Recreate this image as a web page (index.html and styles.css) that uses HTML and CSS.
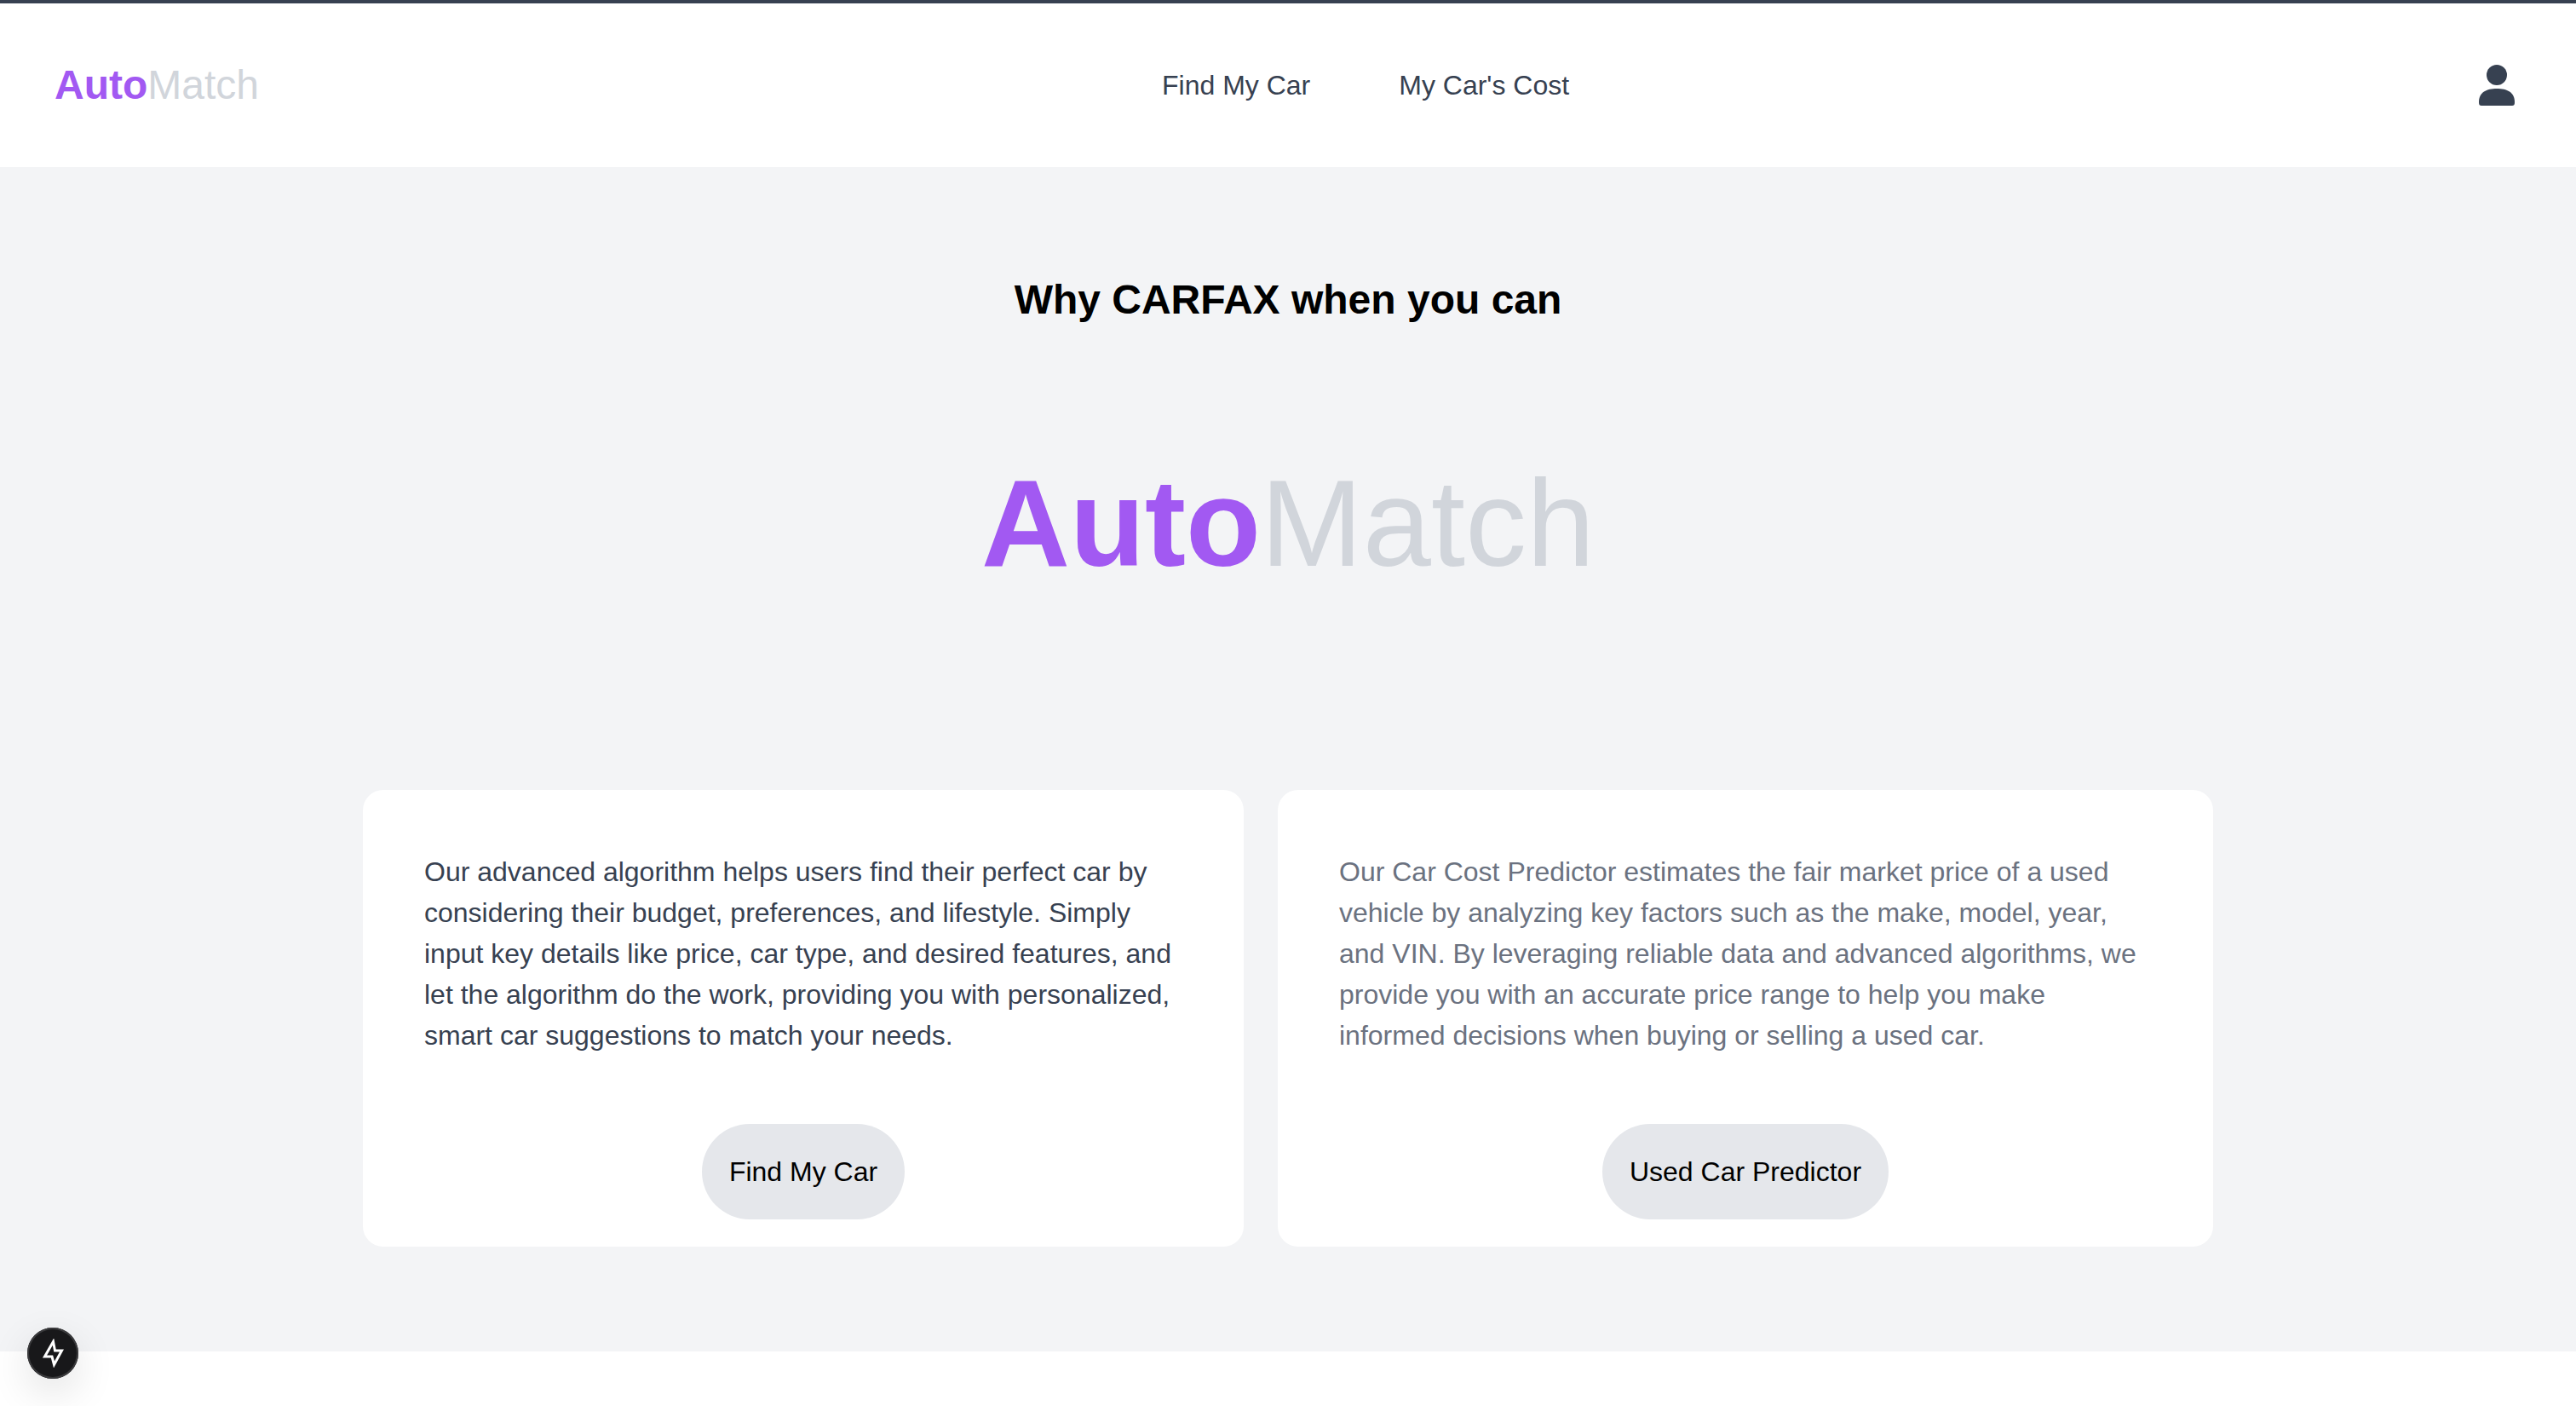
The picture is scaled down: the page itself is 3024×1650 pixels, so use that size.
FILE: index.html
```html
<!DOCTYPE html>
<html lang="en">
<head>
<meta charset="utf-8">
<title>AutoMatch</title>
<link rel="stylesheet" href="styles.css">
</head>
<body>
<header class="header">
  <a class="logo"><span class="brand">Auto</span><span class="muted">Match</span></a>
  <nav class="nav"><a>Find My Car</a><a>My Car's Cost</a></nav>
  <svg class="user" viewBox="0 0 42 48" width="42" height="48"><circle cx="21" cy="12" r="12"/><path d="M0 44C0 32 9 28 21 28S42 32 42 44C42 47 41 48 39 48H3C1 48 0 47 0 44Z"/></svg>
</header>
<main class="main">
  <h2 class="title">Why CARFAX when you can</h2>
  <h1 class="hero"><span class="brand">Auto</span><span class="muted">Match</span></h1>
  <section class="cards">
    <article class="card card-a">
      <p class="copy dark">Our advanced algorithm helps users find their perfect car by considering their budget, preferences, and lifestyle. Simply input key details like price, car type, and desired features, and let the algorithm do the work, providing you with personalized, smart car suggestions to match your needs.</p>
      <button class="btn">Find My Car</button>
    </article>
    <article class="card card-b">
      <p class="copy gray">Our Car Cost Predictor estimates the fair market price of a used vehicle by analyzing key factors such as the make, model, year, and VIN. By leveraging reliable data and advanced algorithms, we provide you with an accurate price range to help you make informed decisions when buying or selling a used car.</p>
      <button class="btn">Used Car Predictor</button>
    </article>
  </section>
</main>
<div class="dev"><svg viewBox="0 0 26 34" width="26" height="34"><path d="M13.500 3.500 3.500 21H12L14.500 30.500 23.500 14H15.500Z"/></svg></div>
</body>
</html>
```
FILE: styles.css
```css
* { box-sizing: border-box; }
html, body { margin: 0; height: 1650px; overflow: hidden; background: #fff; font-family: "Liberation Sans", Arial, sans-serif; }
.header { height: 196px; border-top: 4px solid #374151; padding: 0 64px; background: #fff; display: flex; align-items: center; justify-content: space-between; position: relative; }
.logo { font-size: 48px; line-height: 64px; }
.brand { color: #a259f2; font-weight: 700; }
.muted { color: #d1d5db; font-weight: 400; }
.nav { position: absolute; left: 1364px; top: 0; height: 192px; display: flex; align-items: center; gap: 104px; font-size: 32px; color: #374151; }
.user { fill: #374151; margin-right: 8px; }
.main { height: 1390px; background: #f3f4f6; display: flex; flex-direction: column; align-items: center; padding-top: 120px; }
.title { margin: 0; font-size: 48px; line-height: 72px; font-weight: 700; color: #000; }
.hero { margin: 155px 0 0; font-size: 144px; line-height: 144px; }
.cards { display: flex; gap: 40px; margin-top: 240px; }
.card { background: #fff; border-radius: 24px; padding: 72px 72px 32px; display: flex; flex-direction: column; align-items: center; height: 536px; }
.card-a { width: 1034px; }
.card-b { width: 1098px; }
.copy { margin: 0 0 80px; font-size: 32px; line-height: 48px; width: 100%; }
.dark { color: #374151; }
.gray { color: #6b7280; }
.btn { height: 112px; padding: 0 32px; border: 0; border-radius: 56px; background: #e5e7eb; color: #000; font: 32px/48px "Liberation Sans", Arial, sans-serif; }
.dev { position: fixed; left: 32px; top: 1558px; width: 60px; height: 60px; border-radius: 50%; background: #18181a; box-shadow: 0 0 0 2px #3a3a3c inset, 0 16px 48px rgba(0,0,0,.12); display: flex; align-items: center; justify-content: center; }
.dev svg { fill: none; stroke: #fff; stroke-width: 3; }
```
